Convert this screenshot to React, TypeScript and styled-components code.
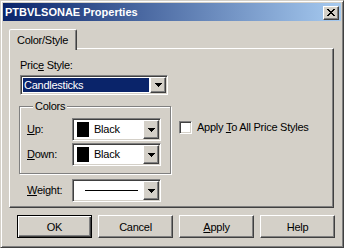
import React from "react";
import styled, { createGlobalStyle, css } from "styled-components";

const Global = createGlobalStyle`
  html, body { margin: 0; padding: 0; background: #D4D0C8; }
  body { font-family: "Liberation Sans", Arial, sans-serif; font-size: 11px; color: #000; letter-spacing: -0.25px; }
  * { box-sizing: border-box; }
`;

const raised = css`
  border: 1px solid;
  border-color: #ffffff #404040 #404040 #ffffff;
  box-shadow: inset -1px -1px #808080, inset 1px 1px #d4d0c8;
  background: #d4d0c8;
`;

const sunken = css`
  border: 1px solid;
  border-color: #808080 #ffffff #ffffff #808080;
  box-shadow: inset 1px 1px #404040, inset -1px -1px #d4d0c8;
`;

const Window = styled.div`
  width: 344px;
  height: 248px;
  background: #d4d0c8;
  border: 1px solid;
  border-color: #d4d0c8 #404040 #404040 #d4d0c8;
  box-shadow: inset 1px 1px #ffffff, inset -1px -1px #808080;
  padding: 2px;
  display: flex;
  flex-direction: column;
`;

const TitleBar = styled.div`
  height: 18px;
  display: flex;
  align-items: center;
  justify-content: space-between;
  padding: 0 2px 0 2px;
  background: linear-gradient(to right, #0a246a, #a6caf0);
`;

const Title = styled.span`
  color: #ffffff;
  font-weight: bold;
  font-size: 11px;
  line-height: 13px;
  letter-spacing: 0;
`;

const CloseButton = styled.button`
  ${raised};
  width: 16px;
  height: 14px;
  padding: 0;
  display: flex;
  align-items: center;
  justify-content: center;
  margin-top: 1px;
`;

const TabStrip = styled.div`
  display: flex;
  height: 21px;
  margin: 8px 0 -2px 6px;
  position: relative;
  z-index: 1;
`;

const Tab = styled.div`
  width: 68px;
  height: 21px;
  border: 1px solid;
  border-bottom: none;
  border-color: #ffffff #404040 transparent #ffffff;
  border-radius: 2px 2px 0 0;
  box-shadow: inset -1px 0 #808080;
  background: #d4d0c8;
  display: flex;
  align-items: center;
  padding-left: 7px;
  line-height: 13px;
`;

const Panel = styled.div`
  margin-left: 6px;
  width: 325px;
  height: 160px;
  border: 1px solid;
  border-color: #ffffff #404040 #404040 #ffffff;
  box-shadow: inset -1px -1px #808080;
  padding: 10px 0 0 10px;
  display: flex;
  flex-direction: column;
`;

const Label = styled.span<{ $width?: number }>`
  line-height: 13px;
  ${(p) => (p.$width ? `width: ${p.$width}px; flex: none;` : "")}
`;

const Key = styled.span`
  text-decoration: underline;
`;

const ComboBox = styled.div<{ $width: number; $height: number; $mt?: number }>`
  ${sunken};
  width: ${(p) => p.$width}px;
  height: ${(p) => p.$height}px;
  margin-top: ${(p) => p.$mt ?? 0}px;
  background: #ffffff;
  padding: 1px;
  display: flex;
  flex: none;
`;

const ComboField = styled.div<{ $selected?: boolean }>`
  flex: 1;
  display: flex;
  align-items: center;
  gap: 5px;
  margin: 1px;
  padding-left: ${(p) => (p.$selected ? 1 : 2)}px;
  line-height: 13px;
  background: ${(p) => (p.$selected ? "#0a246a" : "#ffffff")};
  color: ${(p) => (p.$selected ? "#ffffff" : "#000000")};
`;

const DropButton = styled.div`
  ${raised};
  width: 16px;
  flex: none;
  display: flex;
  align-items: center;
  justify-content: center;
`;

const Swatch = styled.div<{ $color: string }>`
  width: 12px;
  height: 15px;
  background: ${(p) => p.$color};
  flex: none;
`;

const LineSample = styled.div`
  width: 53px;
  height: 1px;
  background: #000;
  margin-left: 8px;
`;

const MiddleRow = styled.div`
  display: flex;
  align-items: flex-start;
  margin-top: 5px;
  margin-left: -1px;
`;

const GroupBox = styled.fieldset`
  width: 152px;
  height: 74px;
  margin: 0;
  border: 1px solid #808080;
  box-shadow: inset 1px 1px #ffffff, 1px 1px #ffffff;
  padding: 5px 0 0 7px;
  display: flex;
  flex-direction: column;
  gap: 2px;
`;

const Legend = styled.legend`
  margin-left: 6px;
  padding: 0 2px;
  line-height: 13px;
  background: #d4d0c8;
`;

const FieldRow = styled.div<{ $mt?: number; $ml?: number }>`
  display: flex;
  align-items: center;
  margin-top: ${(p) => p.$mt ?? 0}px;
  margin-left: ${(p) => p.$ml ?? 0}px;
`;

const CheckRow = styled.label`
  display: flex;
  align-items: center;
  gap: 5px;
  margin: 21px 0 0 8px;
  line-height: 13px;
`;

const CheckBox = styled.span`
  ${sunken};
  width: 13px;
  height: 13px;
  background: #ffffff;
  flex: none;
`;

const ButtonRow = styled.div`
  display: flex;
  gap: 6px;
  margin: 7px 0 0 14px;
`;

const Button = styled.button<{ $default?: boolean }>`
  width: 75px;
  height: 23px;
  padding: 0;
  font-family: inherit;
  font-size: 11px;
  letter-spacing: inherit;
  color: #000;
  background: #d4d0c8;
  ${(p) =>
    p.$default
      ? css`
          border: 1px solid #000;
          box-shadow: inset 1px 1px #ffffff, inset -1px -1px #404040, inset -2px -2px #808080;
        `
      : css`
          border: 1px solid;
          border-color: #ffffff #404040 #404040 #ffffff;
          box-shadow: inset -1px -1px #808080;
        `}
`;

const Arrow = () => (
  <svg width="7" height="4" viewBox="0 0 7 4" shapeRendering="crispEdges">
    <rect x="0" y="0" width="7" height="1" fill="#000" />
    <rect x="1" y="1" width="5" height="1" fill="#000" />
    <rect x="2" y="2" width="3" height="1" fill="#000" />
    <rect x="3" y="3" width="1" height="1" fill="#000" />
  </svg>
);

const CloseGlyph = () => {
  const rows: Array<[number, number][]> = [
    [[0, 2], [6, 2]],
    [[1, 2], [5, 2]],
    [[2, 4]],
    [[3, 2]],
    [[2, 4]],
    [[1, 2], [5, 2]],
    [[0, 2], [6, 2]],
  ];
  return (
    <svg width="8" height="7" viewBox="0 0 8 7" shapeRendering="crispEdges">
      {rows.map((segs, y) =>
        segs.map(([x, w], i) => <rect key={`${y}-${i}`} x={x} y={y} width={w} height={1} fill="#000" />)
      )}
    </svg>
  );
};

const Combo: React.FC<{
  width: number;
  height: number;
  mt?: number;
  selected?: boolean;
  children?: React.ReactNode;
}> = ({ width, height, mt, selected, children }) => (
  <ComboBox $width={width} $height={height} $mt={mt}>
    <ComboField $selected={selected}>{children}</ComboField>
    <DropButton>
      <Arrow />
    </DropButton>
  </ComboBox>
);

export default function App() {
  return (
    <>
      <Global />
      <Window>
        <TitleBar>
          <Title>PTBVLSONAE Properties</Title>
          <CloseButton aria-label="Close">
            <CloseGlyph />
          </CloseButton>
        </TitleBar>
        <TabStrip>
          <Tab>Color/Style</Tab>
        </TabStrip>
        <Panel>
          <Label>
            Pric<Key>e</Key> Style:
          </Label>
          <Combo width={148} height={20} mt={3} selected>
            Candlesticks
          </Combo>
          <MiddleRow>
            <GroupBox>
              <Legend>Colors</Legend>
              <FieldRow>
                <Label $width={45}>
                  <Key>U</Key>p:
                </Label>
                <Combo width={89} height={23}>
                  <Swatch $color="#000" />
                  Black
                </Combo>
              </FieldRow>
              <FieldRow>
                <Label $width={45}>
                  <Key>D</Key>own:
                </Label>
                <Combo width={89} height={23}>
                  <Swatch $color="#000" />
                  Black
                </Combo>
              </FieldRow>
            </GroupBox>
            <CheckRow>
              <CheckBox />
              <span>
                Apply <Key>T</Key>o All Price Styles
              </span>
            </CheckRow>
          </MiddleRow>
          <FieldRow $mt={5} $ml={7}>
            <Label $width={45}>
              <Key>W</Key>eight:
            </Label>
            <Combo width={89} height={23}>
              <LineSample />
            </Combo>
          </FieldRow>
        </Panel>
        <ButtonRow>
          <Button $default>OK</Button>
          <Button>Cancel</Button>
          <Button>
            <Key>A</Key>pply
          </Button>
          <Button>Help</Button>
        </ButtonRow>
      </Window>
    </>
  );
}
